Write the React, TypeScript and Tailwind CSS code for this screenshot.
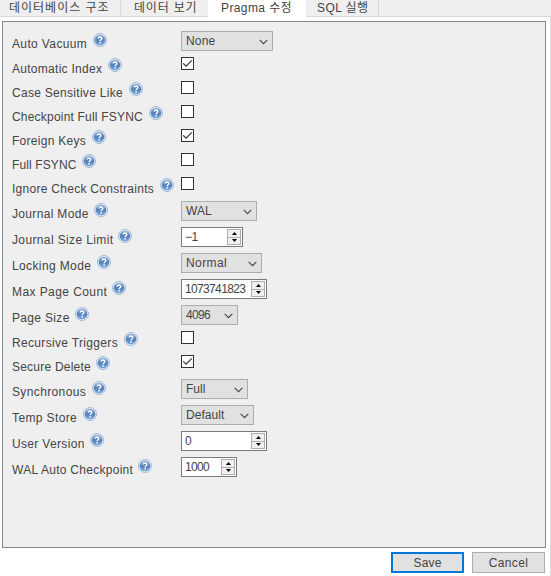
import React from "react";

type Control =
  | { kind: "select"; value: string; width: string; tracking: string }
  | { kind: "spin"; value: string; width: string; tracking: string }
  | { kind: "check"; checked: boolean };

interface Pragma {
  label: string;
  // width of the label column slot, tracking of its text
  slot: string;
  control: Control;
}

const PRAGMAS: Pragma[] = [
  { label: "Auto Vacuum", slot: "w-[81px] tracking-[0.37px]", control: { kind: "select", value: "None", width: "w-[92px]", tracking: "tracking-[0.2px]" } },
  { label: "Automatic Index", slot: "w-[96px] tracking-[0.28px]", control: { kind: "check", checked: true } },
  { label: "Case Sensitive Like", slot: "w-[117px] tracking-[0.29px]", control: { kind: "check", checked: false } },
  { label: "Checkpoint Full FSYNC", slot: "w-[137px] tracking-[0.2px]", control: { kind: "check", checked: false } },
  { label: "Foreign Keys", slot: "w-[80px] tracking-[0.28px]", control: { kind: "check", checked: true } },
  { label: "Full FSYNC", slot: "w-[70px] tracking-[0.12px]", control: { kind: "check", checked: false } },
  { label: "Ignore Check Constraints", slot: "w-[148px] tracking-[0.28px]", control: { kind: "check", checked: false } },
  { label: "Journal Mode", slot: "w-[82px] tracking-[0.33px]", control: { kind: "select", value: "WAL", width: "w-[76px]", tracking: "tracking-[0px]" } },
  { label: "Journal Size Limit", slot: "w-[106px] tracking-[0.37px]", control: { kind: "spin", value: "−1", width: "w-[62px]", tracking: "tracking-[-0.4px]" } },
  { label: "Locking Mode", slot: "w-[85px] tracking-[0.38px]", control: { kind: "select", value: "Normal", width: "w-[81px]", tracking: "tracking-[0.4px]" } },
  { label: "Max Page Count", slot: "w-[100px] tracking-[0.42px]", control: { kind: "spin", value: "1073741823", width: "w-[86px]", tracking: "tracking-[-0.65px]" } },
  { label: "Page Size", slot: "w-[63px] tracking-[0.33px]", control: { kind: "select", value: "4096", width: "w-[57px]", tracking: "tracking-[-0.65px]" } },
  { label: "Recursive Triggers", slot: "w-[112px] tracking-[0.33px]", control: { kind: "check", checked: false } },
  { label: "Secure Delete", slot: "w-[84px] tracking-[0.22px]", control: { kind: "check", checked: true } },
  { label: "Synchronous", slot: "w-[80px] tracking-[0.37px]", control: { kind: "select", value: "Full", width: "w-[67px]", tracking: "tracking-[0px]" } },
  { label: "Temp Store", slot: "w-[71px] tracking-[0.38px]", control: { kind: "select", value: "Default", width: "w-[73px]", tracking: "tracking-[0.05px]" } },
  { label: "User Version", slot: "w-[78px] tracking-[0.33px]", control: { kind: "spin", value: "0", width: "w-[86px]", tracking: "tracking-[-0.65px]" } },
  { label: "WAL Auto Checkpoint", slot: "w-[126px] tracking-[0.28px]", control: { kind: "spin", value: "1000", width: "w-[56px]", tracking: "tracking-[-0.65px]" } },
];

function HelpIcon() {
  return (
    <svg className="block h-[14px] w-[14px]" viewBox="0 0 14 14">
      <defs>
        <linearGradient id="help" x1="0" y1="0" x2="0" y2="1">
          <stop offset="0" stopColor="#8fb0da" />
          <stop offset="0.5" stopColor="#5580ba" />
          <stop offset="1" stopColor="#78a8dc" />
        </linearGradient>
      </defs>
      <circle cx="7" cy="7" r="6.5" fill="#e4ecf6" stroke="#8ba9cf" strokeWidth="0.8" />
      <circle cx="7" cy="7" r="5.3" fill="url(#help)" />
      <path d="M5.2 5.5C5.2 3.4 8.8 3.4 8.8 5.5C8.8 6.7 7.1 6.7 7.1 8.2" fill="none" stroke="#fff" strokeWidth="1.4" />
      <rect x="6.3" y="9.2" width="1.6" height="1.4" fill="#fff" />
    </svg>
  );
}

function Select({ value, width, tracking }: { value: string; width: string; tracking: string }) {
  return (
    <div className={`flex h-5 items-center justify-between border border-[#adadad] bg-[#e1e1e1] pr-1 pl-1 ${width}`}>
      <span className={tracking}>{value}</span>
      <svg className="mt-px h-[6px] w-[9px]" viewBox="0 0 9 6">
        <path d="M0.7 0.9L4.5 4.7L8.3 0.9" fill="none" stroke="#444" strokeWidth="1.1" />
      </svg>
    </div>
  );
}

function SpinBox({ value, width, tracking }: { value: string; width: string; tracking: string }) {
  return (
    <div className={`flex h-5 items-center justify-between border border-[#7a7a7a] bg-white pr-px pl-[3px] ${width}`}>
      <span className={tracking}>{value}</span>
      <div className="flex h-4 w-[14px] shrink-0 flex-col border border-[#adadad] bg-[#f0f0f0]">
        <div className="flex flex-1 items-center justify-center border-b border-[#adadad]">
          <svg className="h-[3px] w-[5px]" viewBox="0 0 5 3"><path d="M0 3L2.5 0L5 3Z" fill="#000" /></svg>
        </div>
        <div className="flex flex-1 items-center justify-center">
          <svg className="h-[3px] w-[5px]" viewBox="0 0 5 3"><path d="M0 0L2.5 3L5 0Z" fill="#000" /></svg>
        </div>
      </div>
    </div>
  );
}

function CheckBox({ checked }: { checked: boolean }) {
  return (
    <div className="h-[13px] w-[13px] border border-[#333] bg-white">
      {checked && (
        <svg className="block h-[11px] w-[11px]" viewBox="0 0 11 11">
          <path d="M1.2 5.3L4.1 8.2L9.8 2.4" fill="none" stroke="#333" strokeWidth="1.2" />
        </svg>
      )}
    </div>
  );
}

function Row({ item }: { item: Pragma }) {
  const { control } = item;
  const isCheck = control.kind === "check";
  return (
    <div className={`flex items-start ${isCheck ? "h-6" : "h-[26px]"}`}>
      <div className={`flex w-[169px] shrink-0 items-start ${isCheck ? "pt-px" : "pt-[2px]"}`}>
        <span className={`shrink-0 pt-[3px] whitespace-nowrap ${item.slot}`}>{item.label}</span>
        <HelpIcon />
      </div>
      {control.kind === "select" && <Select value={control.value} width={control.width} tracking={control.tracking} />}
      {control.kind === "spin" && <SpinBox value={control.value} width={control.width} tracking={control.tracking} />}
      {control.kind === "check" && <CheckBox checked={control.checked} />}
    </div>
  );
}

export default function App() {
  return (
    <div className="flex h-[576px] w-[551px] flex-col overflow-hidden bg-white font-['Liberation_Sans','Noto_Sans_CJK_KR',sans-serif] text-[12px] leading-4 text-[#444]">
      <div className="flex h-[17px] shrink-0 bg-[#efefef] leading-4 whitespace-nowrap">
        <div className="w-[121px] border-r border-b border-[#d9d9d9] pl-[9px] tracking-[1px]">데이터베이스 구조</div>
        <div className="w-[87px] border-b border-[#d9d9d9] pl-[13px] tracking-[0.8px]">데이터 보기</div>
        <div className="w-[98px] bg-white pl-[13px] tracking-[0.4px]">Pragma 수정</div>
        <div className="w-[73px] border-r border-b border-[#d9d9d9] pl-[11px] tracking-[0.4px]">SQL 실행</div>
        <div className="flex-1 border-b border-[#d9d9d9]" />
      </div>
      <div className="flex flex-1 flex-col border-r border-[#dcdcdc] pt-1 pr-1 pl-[2px]">
        <div className="h-[527px] shrink-0 border border-[#828790] bg-[#efefef] pt-[9px] pl-[9px]">
          {PRAGMAS.map((item) => (
            <Row key={item.label} item={item} />
          ))}
        </div>
        <div className="flex justify-end gap-2 pt-1 pr-px">
          <div className="flex h-[21px] w-[73px] items-center justify-center border-2 border-[#0078d7] bg-[#e1e1e1] tracking-[0.2px]">Save</div>
          <div className="flex h-[21px] w-[73px] items-center justify-center border border-[#adadad] bg-[#e1e1e1] tracking-[0.35px]">Cancel</div>
        </div>
      </div>
    </div>
  );
}
